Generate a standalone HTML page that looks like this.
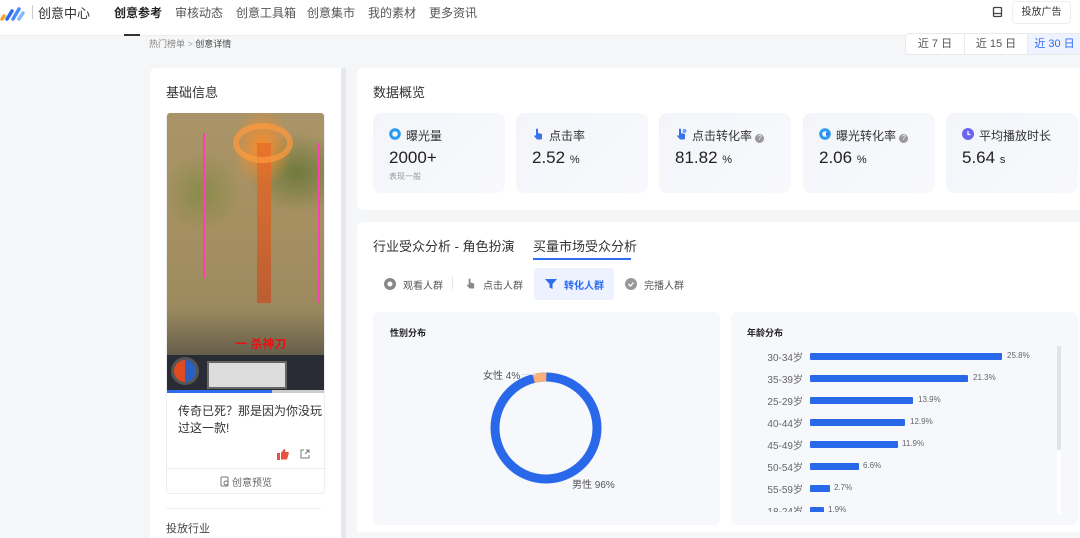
<!DOCTYPE html>
<html><head><meta charset="utf-8"><style>
*{margin:0;padding:0;box-sizing:border-box}
body{width:1080px;height:529px;overflow:hidden;background:#f5f6f8;font-family:"Liberation Sans","Noto Sans CJK SC",sans-serif;color:#333;position:relative}
.a{position:absolute;white-space:nowrap}
.hdr{position:absolute;left:0;top:0;width:1080px;height:36px;background:#fff;border-bottom:1px solid #ebedf0}
.nav{font-size:12px;color:#555;top:4px}
.card{position:absolute;top:113px;width:132px;height:80px;background:linear-gradient(135deg,#f3f5fa,#f8f9fc);border-radius:8px}
.card .l{position:absolute;left:33px;top:14px;font-size:12px;color:#333}
.card .v{position:absolute;left:16px;top:35px;font-size:17px;color:#222;font-weight:500}
.card .v small{font-size:11px}
.card .ic{position:absolute;left:16px;top:15px;width:12px;height:12px}
.row{position:absolute;left:747px;height:14px;font-size:10px;color:#666}
.row .lb{position:absolute;left:0;width:56px;text-align:right;top:0}
.row .b{position:absolute;left:63px;top:3px;height:7px;background:#2968e9;border-radius:1px}
.row .p{position:absolute;top:2px;font-size:8px}
</style></head><body>
<div class="hdr"></div>
<svg class="a" style="left:0;top:4px" width="28" height="18" viewBox="0 0 28 18">
<line x1="2" y1="15" x2="4" y2="12" stroke="#f5a623" stroke-width="3.5" stroke-linecap="round"/>
<line x1="7" y1="15" x2="12" y2="7" stroke="#2c6bf0" stroke-width="3.5" stroke-linecap="round"/>
<line x1="13" y1="15" x2="19" y2="5" stroke="#4a8cf7" stroke-width="3.5" stroke-linecap="round"/>
<line x1="19" y1="15" x2="23" y2="9" stroke="#8ab8fb" stroke-width="3.5" stroke-linecap="round"/>
</svg>
<div class="a" style="left:32px;top:5px;width:1px;height:14px;background:#ccc"></div>
<div class="a" style="left:38px;top:3px;font-size:13px;color:#333">创意中心</div>
<div class="a nav" style="left:114px;color:#222;font-weight:bold">创意参考</div>
<div class="a nav" style="left:175px">审核动态</div>
<div class="a nav" style="left:236px">创意工具箱</div>
<div class="a nav" style="left:307px">创意集市</div>
<div class="a nav" style="left:368px">我的素材</div>
<div class="a nav" style="left:429px">更多资讯</div>
<div class="a" style="left:124px;top:34px;width:16px;height:2px;background:#333"></div>
<svg class="a" style="left:992px;top:6px" width="11" height="12" viewBox="0 0 11 12"><rect x="1.5" y="1.5" width="8" height="9" rx="1" fill="none" stroke="#444" stroke-width="1.3"/><line x1="1.5" y1="7.5" x2="9.5" y2="7.5" stroke="#444" stroke-width="1.3"/></svg>
<div class="a" style="left:1012px;top:1px;width:59px;height:23px;border:1px solid #eceef2;border-radius:4px;background:#fff;font-size:10px;color:#333;text-align:center;line-height:21px">投放广告</div>
<div class="a" style="left:149px;top:37px;font-size:9px;color:#888">热门榜单 <span style="color:#aaa">&gt;</span> <span style="color:#444">创意详情</span></div>
<div class="a" style="left:905px;top:33px;width:175px;height:22px;background:#fff;border:1px solid #e8eaee;border-radius:4px 0 0 4px;font-size:11px;color:#555">
<div class="a" style="left:0;top:0;width:59px;height:20px;line-height:20px;text-align:center;border-right:1px solid #e8eaee">近 7 日</div>
<div class="a" style="left:59px;top:0;width:63px;height:20px;line-height:20px;text-align:center;border-right:1px solid #e8eaee">近 15 日</div>
<div class="a" style="left:122px;top:0;width:53px;height:20px;line-height:20px;text-align:center;background:#eef3ff;color:#2e6cf0">近 30 日</div>
</div>
<!-- left panel -->
<div class="a" style="left:150px;top:68px;width:191px;height:470px;background:#fff;border-radius:6px 0 0 0"></div>
<div class="a" style="left:341px;top:68px;width:5px;height:470px;background:#e6e7ea"></div>
<div class="a" style="left:166px;top:82px;font-size:13px;color:#333">基础信息</div>
<div class="a" style="left:166px;top:113px;width:159px;height:381px;border:1px solid #eceef1;border-radius:4px;background:#fff"></div>
<div class="a" style="left:167px;top:113px;width:157px;height:280px;background:radial-gradient(ellipse 30px 40px at 95px 35px,rgba(255,140,40,.95),rgba(255,120,40,0) 100%),radial-gradient(ellipse 40px 40px at 35px 80px,#8a8a4a,rgba(0,0,0,0)),radial-gradient(ellipse 50px 40px at 130px 60px,#6f7a3c,rgba(0,0,0,0)),linear-gradient(180deg,#a89468 0%,#a69062 40%,#9b8a5e 70%,#5a5548 90%,#2e3040 100%);border-radius:3px 3px 0 0;overflow:hidden">
<div class="a" style="left:90px;top:30px;width:14px;height:160px;background:linear-gradient(#e8702a,#c0552a);opacity:.85"></div>
<div class="a" style="left:66px;top:10px;width:60px;height:40px;border:6px solid #ff9a3c;border-radius:50%;opacity:.7"></div>
<div class="a" style="left:36px;top:20px;width:2px;height:145px;background:#ff3fb3"></div>
<div class="a" style="left:151px;top:30px;width:2px;height:160px;background:#ff3fb3"></div>
<div class="a" style="left:68px;top:222px;font-size:12px;font-weight:bold;color:#e81010">一 杀神刀</div>
<div class="a" style="left:0;top:242px;width:157px;height:36px;background:#2a2c35"></div>
<div class="a" style="left:4px;top:244px;width:28px;height:28px;border-radius:50%;background:linear-gradient(90deg,#e04a20 50%,#2a60c0 50%);border:3px solid #555"></div>
<div class="a" style="left:40px;top:248px;width:80px;height:28px;background:#ddd;border:2px solid #666"></div>
</div>
<div class="a" style="left:167px;top:390px;width:105px;height:3px;background:#2e6cf0"></div>
<div class="a" style="left:272px;top:390px;width:52px;height:3px;background:#ccc"></div>
<div class="a" style="left:178px;top:403px;font-size:12px;line-height:17px;color:#333;white-space:normal;width:146px">传奇已死？那是因为你没玩过这一款!</div>
<svg class="a" style="left:277px;top:449px" width="12" height="11" viewBox="0 0 12 11"><rect x="0" y="4" width="3" height="7" fill="#e8513f"/><path d="M4 4 L7 0 C8.5 0 8.5 1.5 8 3 L11 3 C12 3 12 4.5 11.6 5 L10 10.5 L4 10.5Z" fill="#e8513f"/></svg>
<svg class="a" style="left:300px;top:449px" width="10" height="10" viewBox="0 0 10 10"><path d="M4 1H1v8h8V6M6 1h3v3M9 1L5 5" fill="none" stroke="#777" stroke-width="1"/></svg>
<div class="a" style="left:166px;top:468px;width:159px;height:1px;background:#eceef1"></div>
<svg class="a" style="left:220px;top:476px" width="10" height="11" viewBox="0 0 10 11"><rect x="1" y="1" width="7" height="9" rx="1" fill="none" stroke="#777"/><circle cx="6" cy="7" r="2" fill="#fff" stroke="#777"/></svg>
<div class="a" style="left:232px;top:474px;font-size:10px;color:#666">创意预览</div>
<div class="a" style="left:166px;top:508px;width:155px;height:1px;background:#eef0f2"></div>
<div class="a" style="left:166px;top:520px;font-size:11px;color:#444">投放行业</div>
<!-- data overview -->
<div class="a" style="left:357px;top:68px;width:723px;height:142px;background:#fff;border-radius:6px 0 0 6px"></div>
<div class="a" style="left:373px;top:82px;font-size:13px;color:#333">数据概览</div>
<div class="card" style="left:373px"><svg class="ic" viewBox="0 0 12 12"><circle cx="6" cy="6" r="4.3" fill="none" stroke="#2a9bf5" stroke-width="3"/></svg><div class="l">曝光量</div><div class="v">2000+</div><div class="a" style="left:16px;top:58px;font-size:8px;color:#999">表现一般</div></div>
<div class="card" style="left:516px"><svg class="ic" viewBox="0 0 12 12"><path d="M4 1.5a1 1 0 012 0V5l4 1v4.5a1 1 0 01-1 1H5L2 8l1-1 1 1z" fill="#3b73e8"/></svg><div class="l">点击率</div><div class="v">2.52 <small>%</small></div></div>
<div class="card" style="left:659px"><svg class="ic" viewBox="0 0 12 12"><path d="M4 1.5a1 1 0 012 0V5l4 1v4.5a1 1 0 01-1 1H5L2 8l1-1 1 1z" fill="#3b73e8"/><circle cx="9.5" cy="3" r="2" fill="#6ea1ff"/></svg><div class="l">点击转化率 <span style="display:inline-block;width:9px;height:9px;border-radius:50%;background:#999;color:#fff;font-size:7px;line-height:9px;text-align:center">?</span></div><div class="v">81.82 <small>%</small></div></div>
<div class="card" style="left:803px"><svg class="ic" viewBox="0 0 12 12"><circle cx="6" cy="6" r="4.3" fill="none" stroke="#2a9bf5" stroke-width="3"/><path d="M7 4l4 2-4 2z" fill="#3b73e8"/></svg><div class="l">曝光转化率 <span style="display:inline-block;width:9px;height:9px;border-radius:50%;background:#999;color:#fff;font-size:7px;line-height:9px;text-align:center">?</span></div><div class="v">2.06 <small>%</small></div></div>
<div class="card" style="left:946px"><svg class="ic" viewBox="0 0 12 12"><circle cx="6" cy="6" r="6" fill="#6b64f0"/><path d="M6 3v3.5h2.5" stroke="#fff" fill="none" stroke-width="1.2"/></svg><div class="l">平均播放时长</div><div class="v">5.64 <small>s</small></div></div>
<!-- audience -->
<div class="a" style="left:357px;top:222px;width:723px;height:310px;background:#fff;border-radius:6px 0 0 0"></div>
<div class="a" style="left:373px;top:236px;font-size:13px;color:#333">行业受众分析 - 角色扮演</div>
<div class="a" style="left:533px;top:236px;font-size:13px;color:#333">买量市场受众分析</div>
<div class="a" style="left:533px;top:258px;width:98px;height:2px;background:#2e6cf0"></div>
<svg class="a" style="left:384px;top:278px" width="12" height="12" viewBox="0 0 12 12"><circle cx="6" cy="6" r="6" fill="#888"/><circle cx="6" cy="6" r="2.5" fill="#fff"/></svg>
<div class="a" style="left:403px;top:277px;font-size:10px;color:#555">观看人群</div>
<div class="a" style="left:452px;top:277px;width:1px;height:12px;background:#e5e5e5"></div>
<svg class="a" style="left:465px;top:277px" width="11" height="13" viewBox="0 0 12 12"><path d="M4 1.5a1 1 0 012 0V5l4 1v4.5a1 1 0 01-1 1H5L2 8l1-1 1 1z" fill="#888"/></svg>
<div class="a" style="left:483px;top:277px;font-size:10px;color:#555">点击人群</div>
<div class="a" style="left:534px;top:268px;width:80px;height:32px;background:#eef2ff;border-radius:3px"></div>
<svg class="a" style="left:545px;top:278px" width="12" height="12" viewBox="0 0 12 12"><path d="M0 1h12L7.5 6v5l-3-1.5V6z" fill="#2e6cf0"/></svg>
<div class="a" style="left:564px;top:277px;font-size:10px;color:#2e6cf0;font-weight:bold">转化人群</div>
<svg class="a" style="left:625px;top:278px" width="12" height="12" viewBox="0 0 12 12"><circle cx="6" cy="6" r="6" fill="#999"/><path d="M3.5 6l2 2 3-3.5" stroke="#fff" fill="none" stroke-width="1.3"/></svg>
<div class="a" style="left:644px;top:277px;font-size:10px;color:#555">完播人群</div>
<!-- gender -->
<div class="a" style="left:373px;top:312px;width:347px;height:213px;background:#f6f8fc;border-radius:6px"></div>
<div class="a" style="left:390px;top:326px;font-size:9px;font-weight:bold;color:#222">性别分布</div>
<svg class="a" style="left:486px;top:368px" width="120" height="120" viewBox="0 0 120 120">
<circle cx="60" cy="60" r="51" fill="none" stroke="#2968e9" stroke-width="9"/>
<circle cx="60" cy="60" r="51" fill="none" stroke="#f9b07a" stroke-width="9" stroke-dasharray="12.8 320.4" transform="rotate(-104 60 60)"/>
</svg>
<div class="a" style="left:483px;top:367px;font-size:10px;color:#555">女性 4%</div>
<div class="a" style="left:522px;top:374px;width:14px;height:1px;background:#ddd"></div>
<div class="a" style="left:572px;top:476px;font-size:10px;color:#555">男性 96%</div>
<!-- age -->
<div class="a" style="left:731px;top:312px;width:347px;height:213px;background:#f6f8fc;border-radius:6px;overflow:hidden">
<div class="a" style="left:326px;top:34px;width:4px;height:104px;background:#e2e3e6"></div>
<div class="a" style="left:326px;top:138px;width:4px;height:64px;background:#fff"></div>
</div>
<div class="a" style="left:747px;top:326px;font-size:9px;font-weight:bold;color:#222">年龄分布</div>
<div class="row" style="top:349px"><div class="lb">30-34岁</div><div class="b" style="width:192px;top:4px"></div><div class="p" style="left:260px">25.8%</div></div>
<div class="row" style="top:371px"><div class="lb">35-39岁</div><div class="b" style="width:158px;top:4px"></div><div class="p" style="left:226px">21.3%</div></div>
<div class="row" style="top:393px"><div class="lb">25-29岁</div><div class="b" style="width:103px;top:4px"></div><div class="p" style="left:171px">13.9%</div></div>
<div class="row" style="top:415px"><div class="lb">40-44岁</div><div class="b" style="width:95px;top:4px"></div><div class="p" style="left:163px">12.9%</div></div>
<div class="row" style="top:437px"><div class="lb">45-49岁</div><div class="b" style="width:88px;top:4px"></div><div class="p" style="left:155px">11.9%</div></div>
<div class="row" style="top:459px"><div class="lb">50-54岁</div><div class="b" style="width:49px;top:4px"></div><div class="p" style="left:116px">6.6%</div></div>
<div class="row" style="top:481px"><div class="lb">55-59岁</div><div class="b" style="width:20px;top:4px"></div><div class="p" style="left:87px">2.7%</div></div>
<div class="a" style="left:747px;top:503px;width:320px;height:9px;overflow:hidden"><div class="row" style="left:0;top:0"><div class="lb">18-24岁</div><div class="b" style="width:14px;top:4px"></div><div class="p" style="left:81px">1.9%</div></div></div>
</body></html>
